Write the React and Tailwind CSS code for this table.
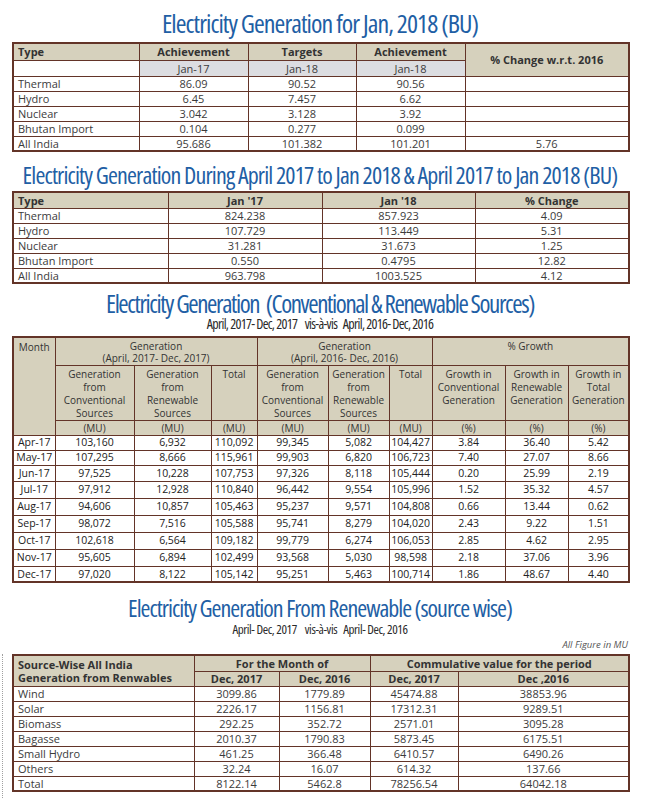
import React from 'react'

const td = 'border border-[#633428] p-0 text-center'
const tdL = 'border border-[#633428] p-0 pl-[4px] text-left'
const tan = 'bg-[#d6d1bd]'

const genTable = [
  ['Thermal', '86.09', '90.52', '90.56', ''],
  ['Hydro', '6.45', '7.457', '6.62', ''],
  ['Nuclear', '3.042', '3.128', '3.92', ''],
  ['Bhutan Import', '0.104', '0.277', '0.099', ''],
  ['All India', '95.686', '101.382', '101.201', '5.76'],
]

const periodTable = [
  ['Thermal', '824.238', '857.923', '4.09'],
  ['Hydro', '107.729', '113.449', '5.31'],
  ['Nuclear', '31.281', '31.673', '1.25'],
  ['Bhutan Import', '0.550', '0.4795', '12.82'],
  ['All India', '963.798', '1003.525', '4.12'],
]

const monthly = [
  ['Apr-17', '103,160', '6,932', '110,092', '99,345', '5,082', '104,427', '3.84', '36.40', '5.42'],
  ['May-17', '107,295', '8,666', '115,961', '99,903', '6,820', '106,723', '7.40', '27.07', '8.66'],
  ['Jun-17', '97,525', '10,228', '107,753', '97,326', '8,118', '105,444', '0.20', '25.99', '2.19'],
  ['Jul-17', '97,912', '12,928', '110,840', '96,442', '9,554', '105,996', '1.52', '35.32', '4.57'],
  ['Aug-17', '94,606', '10,857', '105,463', '95,237', '9,571', '104,808', '0.66', '13.44', '0.62'],
  ['Sep-17', '98,072', '7,516', '105,588', '95,741', '8,279', '104,020', '2.43', '9.22', '1.51'],
  ['Oct-17', '102,618', '6,564', '109,182', '99,779', '6,274', '106,053', '2.85', '4.62', '2.95'],
  ['Nov-17', '95,605', '6,894', '102,499', '93,568', '5,030', '98,598', '2.18', '37.06', '3.96'],
  ['Dec-17', '97,020', '8,122', '105,142', '95,251', '5,463', '100,714', '1.86', '48.67', '4.40'],
]
const monthlyHeights = ['h-[15px]', 'h-[15px]', 'h-[16px]', 'h-[17px]', 'h-[17px]', 'h-[17px]', 'h-[17px]', 'h-[17px]', 'h-[16px]']

const renewables = [
  ['Wind', '3099.86', '1779.89', '45474.88', '38853.96'],
  ['Solar', '2226.17', '1156.81', '17312.31', '9289.51'],
  ['Biomass', '292.25', '352.72', '2571.01', '3095.28'],
  ['Bagasse', '2010.37', '1790.83', '5873.45', '6175.51'],
  ['Small Hydro', '461.25', '366.48', '6410.57', '6490.26'],
  ['Others', '32.24', '16.07', '614.32', '137.66'],
  ['Total', '8122.14', '5462.8', '78256.54', '64042.18'],
]

function Title({ children, className }) {
  return (
    <div className={`text-center whitespace-nowrap font-['Open_Sans',sans-serif] font-stretch-condensed text-[#1f5fa5] ${className}`}>
      {children}
    </div>
  )
}

function Subtitle({ children, className }) {
  return (
    <div className={`text-center whitespace-pre font-['Open_Sans',sans-serif] font-stretch-condensed text-[#2a2a2a] ${className}`}>
      {children}
    </div>
  )
}

export default function App() {
  return (
    <div className="w-[653px] min-h-[799px] bg-white font-['Open_Sans',sans-serif] text-[#3b3b3b] overflow-hidden">
      <div className="pl-[12px] w-[628px]">
        {/* Jan 2018 */}
        <Title className="pt-[10px] mb-[6px] h-[36px] text-[26px] leading-[26px] tracking-[-0.95px]">
          Electricity Generation for Jan, 2018 (BU)
        </Title>
        <table className="table-fixed border-collapse w-[616px] border-2 border-[#633428] text-[11px] leading-none">
          <colgroup>
            <col className="w-[126px]" />
            <col className="w-[109px]" />
            <col className="w-[108px]" />
            <col className="w-[109px]" />
            <col className="w-[164px]" />
          </colgroup>
          <tbody>
            <tr className={`h-[17px] font-bold text-[#333] ${tan}`}>
              <td className={tdL}>Type</td>
              <td className={td}>Achievement</td>
              <td className={td}>Targets</td>
              <td className={td}>Achievement</td>
              <td rowSpan={2} className={td}>% Change w.r.t. 2016</td>
            </tr>
            <tr className="h-[16px]">
              <td className={`${td} bg-white`}></td>
              <td className={`${td} bg-[#dcdde1]`}>Jan-17</td>
              <td className={`${td} bg-[#dcdde1]`}>Jan-18</td>
              <td className={`${td} bg-[#dcdde1]`}>Jan-18</td>
            </tr>
            {genTable.map((r) => (
              <tr key={r[0]} className="h-[15px]">
                <td className={tdL}>{r[0]}</td>
                <td className={td}>{r[1]}</td>
                <td className={td}>{r[2]}</td>
                <td className={td}>{r[3]}</td>
                <td className={td}>{r[4]}</td>
              </tr>
            ))}
          </tbody>
        </table>

        {/* April - Jan */}
        <Title className="mt-[11px] mb-[4px] h-[24px] text-[24px] leading-[24px] tracking-[-0.85px]">
          Electricity Generation During April 2017 to Jan 2018 &amp; April 2017 to Jan 2018 (BU)
        </Title>
        <table className="table-fixed border-collapse w-[616px] border-2 border-[#633428] text-[11px] leading-none">
          <colgroup>
            <col className="w-[155px]" />
            <col className="w-[154px]" />
            <col className="w-[153px]" />
            <col className="w-[154px]" />
          </colgroup>
          <tbody>
            <tr className={`h-[16px] font-bold text-[#333] ${tan}`}>
              <td className={tdL}>Type</td>
              <td className={td}>Jan '17</td>
              <td className={td}>Jan '18</td>
              <td className={td}>% Change</td>
            </tr>
            {periodTable.map((r) => (
              <tr key={r[0]} className="h-[15px]">
                <td className={tdL}>{r[0]}</td>
                <td className={td}>{r[1]}</td>
                <td className={td}>{r[2]}</td>
                <td className={td}>{r[3]}</td>
              </tr>
            ))}
          </tbody>
        </table>

        {/* Conventional & renewable */}
        <Title className="mt-[7px] h-[25px] text-[25px] leading-[25px] tracking-[-1.4px]">
          Electricity Generation &nbsp;(Conventional &amp; Renewable Sources)
        </Title>
        <Subtitle className="mt-[1px] mb-[5px] h-[14px] text-[14px] leading-[14px] tracking-[-0.7px]">
          {'April, 2017- Dec, 2017    vis-à-vis   April, 2016- Dec, 2016'}
        </Subtitle>
        <table className="table-fixed border-collapse w-[616px] border-2 border-[#633428] text-[10px] leading-none text-[#333]">
          <colgroup>
            <col className="w-[42px]" />
            <col className="w-[79px]" />
            <col className="w-[77px]" />
            <col className="w-[46px]" />
            <col className="w-[71px]" />
            <col className="w-[61px]" />
            <col className="w-[43px]" />
            <col className="w-[73px]" />
            <col className="w-[63px]" />
            <col className="w-[61px]" />
          </colgroup>
          <tbody>
            <tr className={`h-[28px] ${tan}`}>
              <td rowSpan={3} className={`${td} align-top pt-[3px] leading-[12px]`}>Month</td>
              <td colSpan={3} className={`${td} align-top pt-[2px] leading-[12px]`}>Generation<br />(April, 2017- Dec, 2017)</td>
              <td colSpan={3} className={`${td} align-top pt-[2px] leading-[12px]`}>Generation<br />(April, 2016- Dec, 2016)</td>
              <td colSpan={3} className={`${td} align-top pt-[2px] leading-[12px]`}>% Growth</td>
            </tr>
            <tr className={`h-[54px] ${tan}`}>
              <td className={`${td} align-top pt-[2px] leading-[13px]`}>Generation<br />from<br />Conventional<br />Sources</td>
              <td className={`${td} align-top pt-[2px] leading-[13px]`}>Generation<br />from<br />Renewable<br />Sources</td>
              <td className={`${td} align-top pt-[2px] leading-[13px]`}>Total</td>
              <td className={`${td} align-top pt-[2px] leading-[13px]`}>Generation<br />from<br />Conventional<br />Sources</td>
              <td className={`${td} align-top pt-[2px] leading-[13px]`}>Generation<br />from<br />Renewable<br />Sources</td>
              <td className={`${td} align-top pt-[2px] leading-[13px]`}>Total</td>
              <td className={`${td} align-top pt-[2px] leading-[13px]`}>Growth in<br />Conventional<br />Generation</td>
              <td className={`${td} align-top pt-[2px] leading-[13px]`}>Growth in<br />Renewable<br />Generation</td>
              <td className={`${td} align-top pt-[2px] leading-[13px]`}>Growth in<br />Total<br />Generation</td>
            </tr>
            <tr className={`h-[15px] ${tan}`}>
              <td className={td}>(MU)</td>
              <td className={td}>(MU)</td>
              <td className={td}>(MU)</td>
              <td className={td}>(MU)</td>
              <td className={td}>(MU)</td>
              <td className={td}>(MU)</td>
              <td className={td}>(%)</td>
              <td className={td}>(%)</td>
              <td className={td}>(%)</td>
            </tr>
            {monthly.map((r, i) => (
              <tr key={r[0]} className={`${monthlyHeights[i]} text-[10.5px] text-[#222]`}>
                {r.map((v, j) => (
                  <td key={j} className={td}>{v}</td>
                ))}
              </tr>
            ))}
          </tbody>
        </table>

        {/* Renewable source wise */}
        <Title className="mt-[13px] h-[24px] text-[24px] leading-[24px] tracking-[-1px]">
          Electricity Generation From Renewable (source wise)
        </Title>
        <Subtitle className="mt-[3px] h-[13px] text-[13px] leading-[13px] tracking-[-0.4px]">
          {'April- Dec, 2017    vis-à-vis   April- Dec, 2016'}
        </Subtitle>
        <div className="h-[18px] pt-[4px] text-right italic text-[9.5px] leading-[10px] text-[#555]">All Figure in MU</div>
      </div>

      <div className="ml-[2px] border-l border-dotted border-[#a0a0a0] pl-[9px] w-[626px] pb-[20px]">
        <table className="table-fixed border-collapse w-[616px] border-2 border-[#633428] text-[11px] leading-none">
          <colgroup>
            <col className="w-[181px]" />
            <col className="w-[85px]" />
            <col className="w-[91px]" />
            <col className="w-[88px]" />
            <col className="w-[171px]" />
          </colgroup>
          <tbody>
            <tr className={`h-[16px] font-bold text-[#333] ${tan}`}>
              <td rowSpan={2} className={`${tdL} leading-[13px]`}>Source-Wise All India<br />Generation from Renwables</td>
              <td colSpan={2} className={td}>For the Month of</td>
              <td colSpan={2} className={td}>Commulative value for the period</td>
            </tr>
            <tr className={`h-[15px] font-bold text-[#333] ${tan}`}>
              <td className={td}>Dec, 2017</td>
              <td className={td}>Dec, 2016</td>
              <td className={td}>Dec, 2017</td>
              <td className={td}>Dec ,2016</td>
            </tr>
            {renewables.map((r) => (
              <tr key={r[0]} className="h-[15px]">
                <td className={tdL}>{r[0]}</td>
                <td className={td}>{r[1]}</td>
                <td className={td}>{r[2]}</td>
                <td className={td}>{r[3]}</td>
                <td className={td}>{r[4]}</td>
              </tr>
            ))}
          </tbody>
        </table>
      </div>
    </div>
  )
}
